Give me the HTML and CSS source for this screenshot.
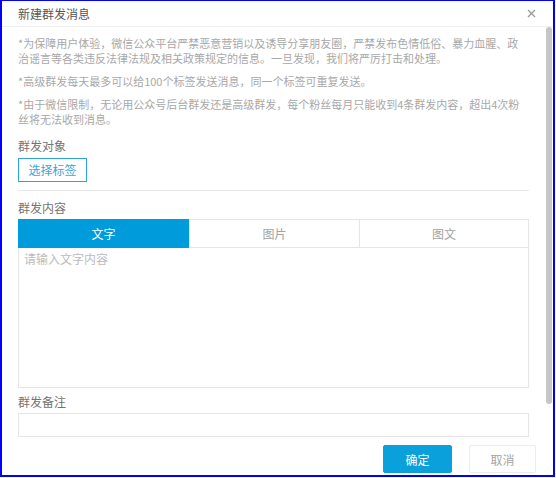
FILE: index.html
```html
<!DOCTYPE html>
<html lang="zh-CN">
<head>
<meta charset="utf-8">
<title>新建群发消息</title>
<link rel="stylesheet" href="styles.css">
</head>
<body>
<div class="modal">
  <div class="modal-header">
    <span class="modal-title">新建群发消息</span>
    <svg class="close" width="9" height="9" viewBox="0 0 9 9"><path d="M1 1L8 8M8 1L1 8" stroke="#9a9a9a" stroke-width="1.3" fill="none"/></svg>
  </div>
  <div class="modal-body">
    <p class="note">*为保障用户体验，微信公众平台严禁恶意营销以及诱导分享朋友圈，严禁发布色情低俗、暴力血腥、政<br>治谣言等各类违反法律法规及相关政策规定的信息。一旦发现，我们将严厉打击和处理。</p>
    <p class="note">*高级群发每天最多可以给100个标签发送消息，同一个标签可重复发送。</p>
    <p class="note">*由于微信限制，无论用公众号后台群发还是高级群发，每个粉丝每月只能收到4条群发内容，超出4次粉<br>丝将无法收到消息。</p>
    <div class="label label-first">群发对象</div>
    <button class="btn-outline">选择标签</button>
    <div class="divider"></div>
    <div class="label label-content">群发内容</div>
    <div class="tabs">
      <div class="tab active">文字</div>
      <div class="tab">图片</div>
      <div class="tab">图文</div>
    </div>
    <div class="textarea"><span class="placeholder">请输入文字内容</span></div>
    <div class="label label-remark">群发备注</div>
    <div class="input"></div>
  </div>
  <div class="modal-footer">
    <button class="btn btn-primary">确定</button>
    <button class="btn btn-default">取消</button>
  </div>
  <div class="scrollbar"></div>
</div>
</body>
</html>
```

FILE: styles.css
```css
* { box-sizing: border-box; }
html, body { margin: 0; padding: 0; background: #fff; }
body {
  font-family: "Noto Sans CJK SC", "Noto Sans", sans-serif;
  font-size: 12px;
}
.modal {
  position: relative;
  width: 555px;
  height: 477px;
  border-style: solid;
  border-color: #0000ff;
  border-width: 1px 2px 2px 2px;
  background: #fff;
}
.modal-header {
  height: 26px;
  border-bottom: 1px solid #f0f0f0;
  display: flex;
  align-items: center;
  justify-content: space-between;
  padding: 0 16px 1px 16px;
}
.modal-title {
  font-size: 12px;
  line-height: 17px;
  color: #555;
}
.close { display: block; margin-top: 1px; margin-right: 1px; }
.modal-body {
  padding: 0 24px 0 16px;
}
.note {
  margin: 8px 0 0 0;
  font-size: 11px;
  line-height: 15px;
  color: #a8a8a8;
  white-space: nowrap;
}
.note:first-child { margin-top: 9px; }
.label {
  font-size: 12px;
  line-height: 17px;
  color: #737373;
}
.label-first { margin-top: 10px; }
.btn-outline {
  display: block;
  margin-top: 4px;
  width: 69px;
  height: 24px;
  padding: 0;
  border: 1px solid #2ea3dc;
  background: #fff;
  color: #3aa5dc;
  font-family: inherit;
  font-size: 12px;
  line-height: 22px;
}
.divider {
  margin-top: 8px;
  height: 1px;
  background: #e6e6e6;
}
.label-content { margin-top: 8px; }
.tabs {
  margin-top: 3px;
  display: grid;
  grid-template-columns: 170px 170px 1fr;
  height: 29px;
  border: 1px solid #e5e5e5;
}
.tab {
  display: flex;
  align-items: center;
  justify-content: center;
  font-size: 12px;
  color: #a3a3a3;
  border-left: 1px solid #e5e5e5;
}
.tab:first-child { border-left: none; }
.tab.active {
  background: #009bda;
  color: #fff;
  margin: -1px 0 -1px -1px;
}
.textarea {
  height: 140px;
  border: 1px solid #e5e5e5;
  border-top: none;
  padding: 2px 5px;
}
.placeholder {
  font-size: 12px;
  line-height: 17px;
  color: #bbb;
}
.label-remark { margin-top: 5px; }
.input {
  margin-top: 3px;
  height: 24px;
  border: 1px solid #e5e5e5;
}
.modal-footer {
  display: flex;
  justify-content: flex-end;
  gap: 17px;
  padding: 8px 17px 0 0;
}
.btn {
  height: 28px;
  padding: 0;
  font-family: inherit;
  font-size: 12px;
  border-radius: 2px;
}
.btn-primary {
  width: 69px;
  background: #0aa0dc;
  border: 1px solid #0aa0dc;
  color: #fff;
}
.btn-default {
  width: 67px;
  background: #fff;
  border: 1px solid #ececec;
  color: #a3a3a3;
}
.scrollbar {
  position: absolute;
  left: 544px;
  top: 26px;
  width: 6px;
  height: 377px;
  border-radius: 3px;
  background: #c6c6c6;
}
```
